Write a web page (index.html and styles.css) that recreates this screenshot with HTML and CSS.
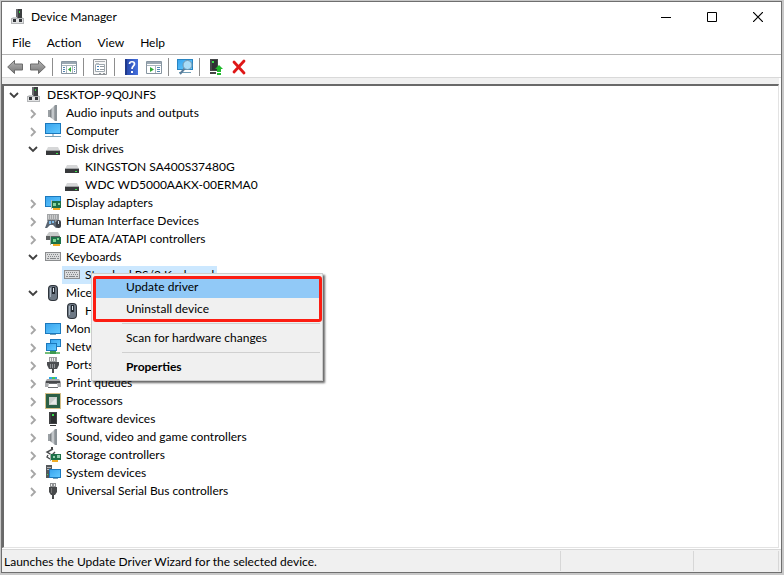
FILE: index.html
```html
<!DOCTYPE html>
<html lang="en">
<head>
  <meta charset="UTF-8">
  <meta name="viewport" content="width=device-width, initial-scale=1">
  <title>Device Manager</title>
  <link rel="stylesheet" href="styles.css">
</head>
<body>

  <!-- icon set -->
  <svg class="sprite" aria-hidden="true">
    <defs>
      <linearGradient id="screen" x1="0" y1="0" x2="1" y2="1">
        <stop offset="0" stop-color="#3aa5ee"/><stop offset="1" stop-color="#62c9ff"/>
      </linearGradient>
      <linearGradient id="metal" x1="0" y1="0" x2="1" y2="0">
        <stop offset="0" stop-color="#6e7377"/><stop offset=".5" stop-color="#d5d9dc"/><stop offset="1" stop-color="#62676b"/>
      </linearGradient>
      <linearGradient id="arrow" x1="0" y1="0" x2="0" y2="1">
        <stop offset="0" stop-color="#b5b5b5"/><stop offset="1" stop-color="#777"/>
      </linearGradient>
      <linearGradient id="book" x1="0" y1="0" x2="1" y2="0">
        <stop offset="0" stop-color="#2345a8"/><stop offset="1" stop-color="#4670dd"/>
      </linearGradient>
    </defs>

    <symbol id="i-open" viewBox="0 0 16 16"><path d="M4 6l4 4 4-4" fill="none" stroke="#404040" stroke-width="1.8"/></symbol>
    <symbol id="i-closed" viewBox="0 0 16 16"><path d="M6 5l4 4-4 4" fill="none" stroke="#a6a6a6" stroke-width="1.8"/></symbol>

    <symbol id="i-host" viewBox="0 0 16 16">
      <path d="M6 0h6v9H6z" fill="#6a6c6f"/><path d="M8 0h4v9H8z" fill="#3c3e40"/><path d="M9 2h1v2H9z" fill="#31d843"/>
      <path d="M3 8h4v1h5v-1l2 2v5H1v-5z" fill="#c9cbcc"/><path d="M1 9h13v6H1z" fill="#b4b6b8"/><path d="M2 10h11v4H2z" fill="#e2e3e4"/>
      <path d="M3 10h3v3H3zM9 10h3v3H9z" fill="#34363a"/>
    </symbol>
    <symbol id="i-speaker" viewBox="0 0 16 16">
      <path d="M3 5h4v7H3z" fill="#6a6f73"/><path d="M5 5l5-5h1v16h-1l-5-4z" fill="url(#metal)"/><path d="M3 5h2v7H3z" fill="#9a9fa3"/><path d="M10 0h2v16h-2z" fill="#8b9297"/>
    </symbol>
    <symbol id="i-computer" viewBox="0 0 16 16">
      <path d="M0 0h16v11H0z" fill="#1b79bd"/><path d="M1 1h14v9H1z" fill="url(#screen)"/><path d="M7 11h2v2H7z" fill="#b7c4cc"/><path d="M0 13h16v1H0z" fill="#76a1b9"/>
    </symbol>
    <symbol id="i-monitor" viewBox="0 0 16 16">
      <path d="M0 2h16v11H0z" fill="#1b79bd"/><path d="M1 3h14v9H1z" fill="url(#screen)"/><path d="M5 13h6v1H5z" fill="#76a1b9"/>
    </symbol>
    <symbol id="i-disk" viewBox="0 0 16 16">
      <path d="M3 6h10l2 4H1z" fill="#d6d7d8"/><path d="M1 10h14v4H1z" fill="#37393b"/><path d="M1 9h14v1H1z" fill="#a2a4a6"/><path d="M11 12h2v1h-2z" fill="#3ee04e"/>
    </symbol>
    <symbol id="i-display" viewBox="0 0 16 16">
      <path d="M0 1h16v11H0z" fill="#1b79bd"/><path d="M1 2h14v9H1z" fill="url(#screen)"/>
      <path d="M6 6h10v7H6z" fill="#1c7047"/><path d="M6 5h1v9H6z" fill="#b3c0b9"/><path d="M8 8h3v3H8zM13 8h2v2h-2z" fill="#86d39d"/><path d="M8 13h7v2H8z" fill="#f0ac25"/>
    </symbol>
    <symbol id="i-hid" viewBox="0 0 16 16">
      <path d="M2 1h12v7H2z" fill="#a3a5a7"/><path d="M3 3h10M3 5h10" stroke="#f4f4f4" stroke-dasharray="1 1"/>
      <path d="M3 7h7l3 7-2 1-3-3H5l-3 3H0z" fill="#596572"/><path d="M4 8h2v3H4zM7 8h2v2H7z" fill="#80bbe7"/>
      <rect x="11" y="7" width="5" height="8" rx="2" fill="#3d4249"/><path d="M13 8h1v3h-1z" fill="#d9e4ef"/>
    </symbol>
    <symbol id="i-ide" viewBox="0 0 16 16">
      <path d="M4 1h9l2 4H1z" fill="#c8caca"/><path d="M1 5h14v4H1z" fill="#5d6061"/>
      <path d="M6 6h10v7H6z" fill="#1c7047"/><path d="M5 5h1v9H5z" fill="#a4afa9"/><path d="M8 8h3v3H8zM12 7h2v2h-2z" fill="#79d18e"/><path d="M8 13h7v2H8z" fill="#f0ac25"/>
    </symbol>
    <symbol id="i-keyboard" viewBox="0 0 16 16">
      <path d="M0 3h16v9H0z" fill="#8b8d8f"/><path d="M1 4h14v7H1z" fill="#dadbdc"/>
      <path d="M2 5h12M3 7h12" stroke="#85888a" stroke-dasharray="1 1" transform="translate(0 .5)"/><path d="M2 9h2v1H2zM5 9h6v1H5zM12 9h2v1h-2z" fill="#85888a"/>
    </symbol>
    <symbol id="i-mouse" viewBox="0 0 16 16">
      <rect x="3" y="0" width="10" height="16" rx="4" fill="#2e343b"/><rect x="4" y="1" width="8" height="14" rx="3" fill="#6d7884"/>
      <path d="M7 2h3v7H7z" fill="#252b32"/><path d="M8 3h1v4H8z" fill="#dce6f0"/><path d="M5 3h1v9H5z" fill="#a8b4bf"/>
    </symbol>
    <symbol id="i-network" viewBox="0 0 16 16">
      <path d="M5 0h11v8H5z" fill="#1b79bd"/><path d="M6 1h9v6H6z" fill="url(#screen)"/>
      <path d="M1 4h11v8H1z" fill="#1b79bd"/><path d="M2 5h9v6H2z" fill="url(#screen)"/>
      <path d="M7 12h2v2H7z" fill="#63a769"/><path d="M0 13h15v2H0z" fill="#74bd79"/><path d="M5 12h6v3H5z" fill="#3b9850"/>
    </symbol>
    <symbol id="i-port" viewBox="0 0 16 16">
      <path d="M4 0h8v5H4z" fill="#9a9c9e"/><path d="M5 1h1v3H5zM7 1h1v3H7zM9 1h1v3H9z" fill="#eee"/>
      <path d="M2 5h12v3l-2 4H4L2 8z" fill="#4c4e51"/><path d="M5 7h1v4H5zM7 7h1v4H7zM9 7h1v4H9z" fill="#929598"/><path d="M7 12h2v4H7z" fill="#4c4e51"/>
    </symbol>
    <symbol id="i-printer" viewBox="0 0 16 16">
      <path d="M4 2h8v3H4z" fill="#2ba9e9"/><path d="M7 2h3v3H7z" fill="#45c653"/><path d="M2 4h12l2 3v5H0V7z" fill="#a8aaac"/>
      <path d="M1 6h14v2H1z" fill="#47494c"/><path d="M4 8h8l1 5H3z" fill="#fff"/><path d="M4 8h8v1H4zM3 12h10v1H3z" fill="#6a6d70"/>
    </symbol>
    <symbol id="i-cpu" viewBox="0 0 16 16">
      <path d="M0 0h16v16H0z" fill="#f3ecd6"/><path d="M.5.5h15v15H.5z" fill="none" stroke="#b3923a" stroke-dasharray="1 1"/><path d="M1 1h14v14H1z" fill="#2b5f45"/>
      <path d="M4 4h8v8H4z" fill="#c9cecb"/><path d="M5 11L11 5v6z" fill="#e6e9e7"/>
    </symbol>
    <symbol id="i-software" viewBox="0 0 16 16">
      <path d="M4 1h8v12H4z" fill="#404244"/><path d="M6 2h5v10H6z" fill="#2c2e30"/><path d="M7 3h2v2H7z" fill="#39dc4b"/><path d="M5 14h6v1H5z" fill="#333"/>
    </symbol>
    <symbol id="i-storage" viewBox="0 0 16 16">
      <path d="M8 2L2 5l5 3 3-3M3 8l-1 2 3 2" fill="none" stroke="#4a4c4e" stroke-width="1.4"/><path d="M6 0h2v2H6z" fill="#444"/>
      <path d="M6 7h10v6H6z" fill="#1c7047"/><path d="M5 6h1v8H5z" fill="#a4afa9"/><path d="M8 9h2v2H8zM12 8h3v3h-3z" fill="#95ceb0"/><path d="M7 13h6v2H7z" fill="#f0ac25"/>
    </symbol>
    <symbol id="i-system" viewBox="0 0 16 16">
      <path d="M1 0h6v13H1z" fill="#55585b"/><path d="M2 2h4v1H2zM2 4h4v1H2z" fill="#b2b5b8"/><path d="M2 9h1v1H2z" fill="#40df51"/>
      <path d="M4 4h12v9H4z" fill="#1b79bd"/><path d="M5 5h10v7H5z" fill="url(#screen)"/><path d="M8 13h5v1H8z" fill="#76a1b9"/>
    </symbol>
    <symbol id="i-usb" viewBox="0 0 16 16">
      <path d="M5 0h6v5H5z" fill="#909294"/><path d="M6 1h1v2H6zM9 1h1v2H9z" fill="#eee"/><path d="M4 4h8v5l-2 3H6L4 9z" fill="#47494b"/><path d="M6 5h1v5H6z" fill="#777"/><path d="M7 12h2v4H7z" fill="#47494b"/>
    </symbol>

    <symbol id="t-back" viewBox="0 0 16 16"><path d="M.7 8L7.500 1.500V5H15.500v6H7.500v3.500z" fill="url(#arrow)" stroke="#6c6c6c"/></symbol>
    <symbol id="t-forward" viewBox="0 0 16 16"><path d="M15.300 8L8.500 1.500V5H.5v6h8v3.500z" fill="url(#arrow)" stroke="#6c6c6c"/></symbol>
    <symbol id="t-tree" viewBox="0 0 16 16">
      <path d="M.5 2.500h15v12H.5z" fill="#fff" stroke="#8795a1"/><path d="M1 3h14v2H1z" fill="#9ba8b3"/><path d="M1 6h14v1H1zM5 7h1v7H5zM11 7h1v7h-1z" fill="#a9b4bd"/>
      <path d="M2 8h2v1H2zM2 10h2v1H2zM2 12h2v1H2zM13 8h1v1h-1zM13 10h1v1h-1zM13 12h1v1h-1z" fill="#5486b3"/><path d="M10 8v5l-3-2.500z" fill="#31a936"/>
    </symbol>
    <symbol id="t-props" viewBox="0 0 16 16">
      <path d="M1.500.5h13v15h-13z" fill="#f7f7f7" stroke="#8f9396"/><path d="M3 2h10v1H3z" fill="#a9adb1"/><path d="M3.500 5.500h9v7h-9z" fill="#fff" stroke="#9fa8af"/><path d="M4 4h3v2H4z" fill="#b5bdc3"/>
      <path d="M5 7h2v1H5zM5 10h2v1H5z" fill="#427fb5"/><path d="M8 7h4v1H8zM8 10h4v1H8zM7 14h2v1H7zM11 14h2v1h-2z" fill="#939a9f"/>
    </symbol>
    <symbol id="t-help" viewBox="0 0 16 16">
      <path d="M2 0h13v16H2z" fill="url(#book)"/><path d="M2 0h2v16H2z" fill="#203a8c"/><path d="M6.500 5c0-3 5-3 5 0 0 2-2.500 2-2.500 5" fill="none" stroke="#fff" stroke-width="1.700"/><path d="M8 12h2v2H8z" fill="#fff"/>
    </symbol>
    <symbol id="t-action" viewBox="0 0 16 16">
      <path d="M.5 2.500h15v12H.5z" fill="#fff" stroke="#8795a1"/><path d="M1 3h14v2H1z" fill="#9ba8b3"/><path d="M1 6h14v1H1zM9 7h1v7H9z" fill="#a9b4bd"/>
      <path d="M11 8h3v1h-3zM11 10h3v1h-3zM11 12h3v1h-3z" fill="#5486b3"/><path d="M4 8v5l4-2.500z" fill="#31a936"/>
    </symbol>
    <symbol id="t-scan" viewBox="0 0 16 16">
      <path d="M0 0h16v11H0z" fill="#2985c2"/><path d="M1 1h14v9H1z" fill="url(#screen)"/><path d="M2 13h12v1H2z" fill="#6f9db7"/>
      <path d="M8 9l-5 6" stroke="#5b7e9b" stroke-width="2"/><circle cx="10.500" cy="6" r="4.500" fill="#a9dcf8" stroke="#7195ae"/>
    </symbol>
    <symbol id="t-update" viewBox="0 0 16 16">
      <path d="M2 0h8v12H2z" fill="#454749"/><path d="M4 1h5v10H4z" fill="#2f3133"/><path d="M4 2h2v2H4z" fill="#38dc49"/><path d="M2 13h6v2H2z" fill="#444"/>
      <path d="M11 6l4 4h-2v3H9v-3H7z" fill="#20b92c"/><path d="M9 14h4v2H9z" fill="#20b92c"/>
    </symbol>
    <symbol id="t-remove" viewBox="0 0 16 16"><path d="M3 3l10 11M13 2L3 13" stroke="#df1717" stroke-width="2.800" stroke-linecap="round"/></symbol>
  </svg>

  <div class="window">
    <header class="titlebar">
      <svg class="icon"><use href="#i-host"/></svg>
      <h1>Device Manager</h1>
      <div class="controls">
        <button aria-label="Minimize"><svg viewBox="0 0 10 10"><path d="M0 5h10v1H0z"/></svg></button>
        <button aria-label="Maximize"><svg viewBox="0 0 10 10"><path d="M.5.5h9v9h-9z" fill="none" stroke="#000"/></svg></button>
        <button aria-label="Close"><svg viewBox="0 0 10 10"><path d="M0 0l10 10M10 0L0 10" stroke="#000" stroke-width="1.200"/></svg></button>
      </div>
    </header>

    <nav class="menubar">
      <button>File</button>
      <button>Action</button>
      <button>View</button>
      <button>Help</button>
    </nav>

    <div class="toolbar">
      <button aria-label="Back"><svg class="icon"><use href="#t-back"/></svg></button>
      <button aria-label="Forward"><svg class="icon"><use href="#t-forward"/></svg></button>
      <span class="sep"></span>
      <button aria-label="Show console tree"><svg class="icon"><use href="#t-tree"/></svg></button>
      <span class="sep"></span>
      <button aria-label="Properties"><svg class="icon"><use href="#t-props"/></svg></button>
      <span class="sep"></span>
      <button aria-label="Help"><svg class="icon"><use href="#t-help"/></svg></button>
      <button aria-label="Show action pane"><svg class="icon"><use href="#t-action"/></svg></button>
      <span class="sep"></span>
      <button aria-label="Scan for hardware changes"><svg class="icon"><use href="#t-scan"/></svg></button>
      <span class="sep"></span>
      <button aria-label="Update driver"><svg class="icon"><use href="#t-update"/></svg></button>
      <button aria-label="Uninstall device"><svg class="icon"><use href="#t-remove"/></svg></button>
    </div>

    <main class="tree">
      <ul>
        <li>
          <div class="row"><button class="toggle" aria-label="Collapse"><svg class="icon"><use href="#i-open"/></svg></button><span class="node"><svg class="icon"><use href="#i-host"/></svg>DESKTOP-9Q0JNFS</span></div>
          <ul>
            <li><div class="row"><button class="toggle" aria-label="Expand"><svg class="icon"><use href="#i-closed"/></svg></button><span class="node"><svg class="icon"><use href="#i-speaker"/></svg>Audio inputs and outputs</span></div></li>
            <li><div class="row"><button class="toggle" aria-label="Expand"><svg class="icon"><use href="#i-closed"/></svg></button><span class="node"><svg class="icon"><use href="#i-computer"/></svg>Computer</span></div></li>
            <li>
              <div class="row"><button class="toggle" aria-label="Collapse"><svg class="icon"><use href="#i-open"/></svg></button><span class="node"><svg class="icon"><use href="#i-disk"/></svg>Disk drives</span></div>
              <ul>
                <li><div class="row leaf"><span class="node"><svg class="icon"><use href="#i-disk"/></svg>KINGSTON SA400S37480G</span></div></li>
                <li><div class="row leaf"><span class="node"><svg class="icon"><use href="#i-disk"/></svg>WDC WD5000AAKX-00ERMA0</span></div></li>
              </ul>
            </li>
            <li><div class="row"><button class="toggle" aria-label="Expand"><svg class="icon"><use href="#i-closed"/></svg></button><span class="node"><svg class="icon"><use href="#i-display"/></svg>Display adapters</span></div></li>
            <li><div class="row"><button class="toggle" aria-label="Expand"><svg class="icon"><use href="#i-closed"/></svg></button><span class="node"><svg class="icon"><use href="#i-hid"/></svg>Human Interface Devices</span></div></li>
            <li><div class="row"><button class="toggle" aria-label="Expand"><svg class="icon"><use href="#i-closed"/></svg></button><span class="node"><svg class="icon"><use href="#i-ide"/></svg>IDE ATA/ATAPI controllers</span></div></li>
            <li>
              <div class="row"><button class="toggle" aria-label="Collapse"><svg class="icon"><use href="#i-open"/></svg></button><span class="node"><svg class="icon"><use href="#i-keyboard"/></svg>Keyboards</span></div>
              <ul>
                <li><div class="row leaf"><span class="node selected"><svg class="icon"><use href="#i-keyboard"/></svg>Standard PS/2 Keyboard</span></div></li>
              </ul>
            </li>
            <li>
              <div class="row"><button class="toggle" aria-label="Collapse"><svg class="icon"><use href="#i-open"/></svg></button><span class="node"><svg class="icon"><use href="#i-mouse"/></svg>Mice</span></div>
              <ul>
                <li><div class="row leaf"><span class="node"><svg class="icon"><use href="#i-mouse"/></svg>H</span></div></li>
              </ul>
            </li>
            <li><div class="row"><button class="toggle" aria-label="Expand"><svg class="icon"><use href="#i-closed"/></svg></button><span class="node"><svg class="icon"><use href="#i-monitor"/></svg>Monitors</span></div></li>
            <li><div class="row"><button class="toggle" aria-label="Expand"><svg class="icon"><use href="#i-closed"/></svg></button><span class="node"><svg class="icon"><use href="#i-network"/></svg>Network</span></div></li>
            <li><div class="row"><button class="toggle" aria-label="Expand"><svg class="icon"><use href="#i-closed"/></svg></button><span class="node"><svg class="icon"><use href="#i-port"/></svg>Ports</span></div></li>
            <li><div class="row"><button class="toggle" aria-label="Expand"><svg class="icon"><use href="#i-closed"/></svg></button><span class="node"><svg class="icon"><use href="#i-printer"/></svg>Print queues</span></div></li>
            <li><div class="row"><button class="toggle" aria-label="Expand"><svg class="icon"><use href="#i-closed"/></svg></button><span class="node"><svg class="icon"><use href="#i-cpu"/></svg>Processors</span></div></li>
            <li><div class="row"><button class="toggle" aria-label="Expand"><svg class="icon"><use href="#i-closed"/></svg></button><span class="node"><svg class="icon"><use href="#i-software"/></svg>Software devices</span></div></li>
            <li><div class="row"><button class="toggle" aria-label="Expand"><svg class="icon"><use href="#i-closed"/></svg></button><span class="node"><svg class="icon"><use href="#i-speaker"/></svg>Sound, video and game controllers</span></div></li>
            <li><div class="row"><button class="toggle" aria-label="Expand"><svg class="icon"><use href="#i-closed"/></svg></button><span class="node"><svg class="icon"><use href="#i-storage"/></svg>Storage controllers</span></div></li>
            <li><div class="row"><button class="toggle" aria-label="Expand"><svg class="icon"><use href="#i-closed"/></svg></button><span class="node"><svg class="icon"><use href="#i-system"/></svg>System devices</span></div></li>
            <li><div class="row"><button class="toggle" aria-label="Expand"><svg class="icon"><use href="#i-closed"/></svg></button><span class="node"><svg class="icon"><use href="#i-usb"/></svg>Universal Serial Bus controllers</span></div></li>
          </ul>
        </li>
      </ul>

      <div class="context-menu">
        <button class="active">Update driver</button>
        <button>Uninstall device</button>
        <hr>
        <button>Scan for hardware changes</button>
        <hr>
        <button class="default">Properties</button>
        <div class="highlight"></div>
      </div>
    </main>

    <footer class="statusbar">
      <span class="message">Launches the Update Driver Wizard for the selected device.</span>
      <span class="pane"></span>
      <span class="pane last"></span>
    </footer>
  </div>

</body>
</html>
```
FILE: styles.css
```css
* {
  box-sizing: border-box;
}

body {
  margin: 0;
  padding: 1px 2px 2px 1px;
  height: 100vh;
  background: #c8c8c8;
  font-family: Lato, "Open Sans", sans-serif;
  font-size: 12px;
  line-height: 18px;
  color: #000;
}

button {
  margin: 0;
  padding: 0;
  border: 0;
  background: none;
  font: inherit;
  color: inherit;
}

ul {
  margin: 0;
  padding: 0;
  list-style: none;
}

.sprite {
  position: absolute;
  width: 0;
  height: 0;
}

.icon {
  display: block;
  flex: none;
  width: 16px;
  height: 16px;
}

.window {
  display: flex;
  flex-direction: column;
  height: 100%;
  border: 1px solid #6f6f6f;
  background: #fff;
}

/* title bar */
.titlebar {
  display: flex;
  align-items: center;
  height: 30px;
  padding-left: 8px;
}

.titlebar h1 {
  margin: 0 auto 0 5px;
  font-size: 12px;
  font-weight: normal;
}

.controls {
  display: flex;
}

.controls button {
  display: flex;
  align-items: center;
  justify-content: center;
  width: 46px;
  height: 28px;
}

.controls svg {
  width: 10px;
  height: 10px;
}

/* menu bar */
.menubar {
  display: flex;
  height: 23px;
  padding-left: 2px;
  border-bottom: 1px solid #b4b4b4;
}

.menubar button {
  padding: 0 8px;
}

/* toolbar */
.toolbar {
  display: flex;
  align-items: center;
  height: 23px;
  padding: 1px 0 0 1px;
  border-bottom: 1px solid #d9d9d9;
}

.toolbar button {
  display: flex;
  align-items: center;
  justify-content: center;
  width: 23px;
  height: 20px;
}

.sep {
  width: 1px;
  height: 18px;
  margin: 0 4px 0 3px;
  background: #8d8d8d;
}

/* device tree */
.tree {
  position: relative;
  flex: 1;
  margin: 6px 2px 0 0;
  border: 2px solid #696969;
  border-right: 1px solid #e3e3e3;
  border-bottom: 1px solid #e3e3e3;
  box-shadow: 0 -6px 0 #f0f0f0;
}

.tree ul ul {
  padding-left: 19px;
}

.row {
  display: flex;
  height: 18px;
}

.toggle {
  display: flex;
  align-items: center;
  justify-content: center;
  width: 20px;
}

.leaf {
  padding-left: 20px;
}

.node {
  display: flex;
  align-items: center;
  gap: 5px;
  padding: 0 3px 0 2px;
  white-space: nowrap;
}

.selected {
  background: #cce8ff;
}

/* context menu */
.context-menu {
  position: absolute;
  top: 187px;
  left: 87px;
  width: 232px;
  padding: 2px;
  border: 1px solid #ccc;
  background: #f0f0f0;
  box-shadow: 2px 2px 2px rgba(0, 0, 0, 0.6);
}

.context-menu button {
  display: block;
  width: 100%;
  height: 22px;
  padding-left: 32px;
  text-align: left;
}

.context-menu .active {
  background: #91c9f7;
}

.context-menu .default {
  font-weight: bold;
}

.context-menu hr {
  height: 1px;
  margin: 3px 0 3px 28px;
  border: 0;
  background: #d0d0d0;
}

.highlight {
  position: absolute;
  top: 2px;
  left: 1px;
  right: 0;
  height: 46px;
  border: 3px solid #fc1d12;
  border-radius: 3px;
  pointer-events: none;
}

/* status bar */
.statusbar {
  display: flex;
  height: 23px;
  margin-top: 1px;
  padding: 1px 2px;
  border-top: 1px solid #d7d7d7;
  background: #f0f0f0;
}

.message {
  flex: 1;
  line-height: 21px;
}

.pane {
  width: 133px;
  border-left: 1px solid #d7d7d7;
}

.last {
  width: 86px;
  border-right: 1px solid #d7d7d7;
}
```
